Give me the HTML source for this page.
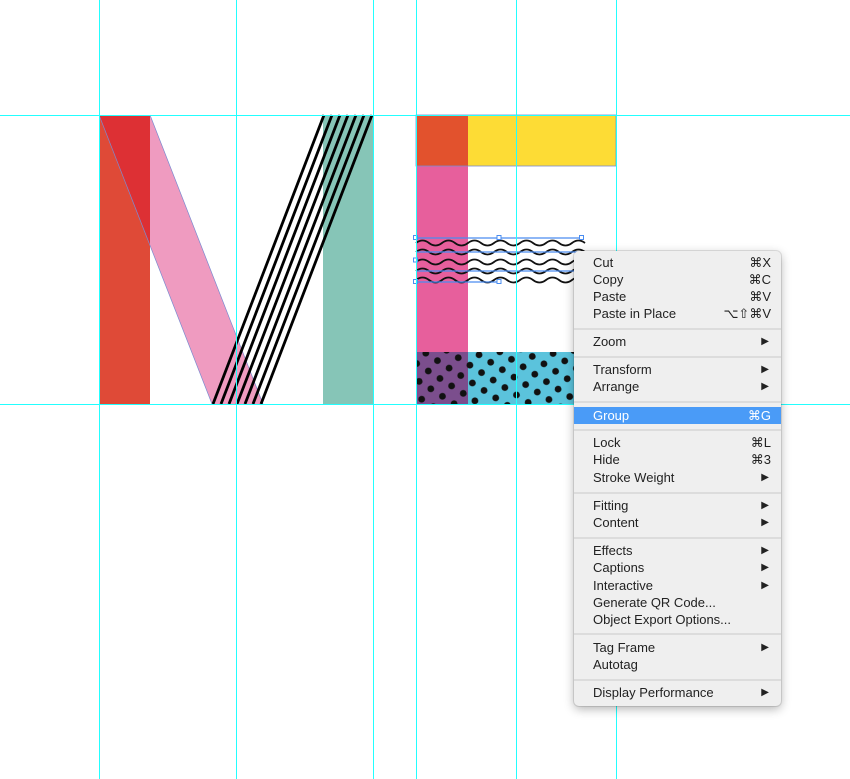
<!DOCTYPE html>
<html><head><meta charset="utf-8"><style>
body{margin:0;width:850px;height:779px;background:#fff;position:relative;overflow:hidden;font-family:"Liberation Sans",sans-serif}
.menu{position:absolute;left:574px;top:251px;width:207px;height:455px;background:#efefef;border-radius:5px;box-shadow:0 3px 10px rgba(0,0,0,.3),0 0 0 1px rgba(0,0,0,.1)}
.it{position:absolute;left:0;width:207px;height:17px;font-size:13px;color:#222;line-height:17px}
.it span.l{position:absolute;left:19px}
.it span.r{position:absolute;right:10px}
.it span.a{position:absolute;right:12px;font-size:10px}
.sep{position:absolute;left:0;width:207px;height:2px;background:#dcdcdc}
.hl{background:#4a9bf7;color:#fff}
.gv{position:absolute;top:0;width:1px;height:779px;background:#2ff}
.gh{position:absolute;left:0;height:1px;width:850px;background:#2ff}
</style></head><body>
<svg width="850" height="779" style="position:absolute;left:0;top:0">
<defs>
<pattern id="dots" width="21" height="18" patternUnits="userSpaceOnUse" patternTransform="rotate(-8)">
<circle cx="5" cy="4" r="3.4" fill="#111"/><circle cx="15.5" cy="13" r="3.4" fill="#111"/>
</pattern>
</defs>
<rect x="99" y="115" width="51" height="289" fill="#df4a37"/>
<polygon points="99,115 150,115 263,404 212,404" fill="#ef9bc0"/>
<polygon points="99,115 150,115 150,245" fill="#dd3034"/>
<rect x="323" y="115" width="50" height="289" fill="#86c5b7"/>
<line x1="99" y1="115" x2="212" y2="404" stroke="#7a8ad0" stroke-width=".7"/>
<line x1="150" y1="115" x2="263" y2="404" stroke="#7a8ad0" stroke-width=".7"/>
<g stroke="#000" stroke-width="2.8">
<line x1="324" y1="115" x2="213" y2="404"/><line x1="332" y1="115" x2="221" y2="404"/><line x1="340" y1="115" x2="229" y2="404"/><line x1="348" y1="115" x2="237" y2="404"/><line x1="356" y1="115" x2="245" y2="404"/><line x1="364" y1="115" x2="253" y2="404"/><line x1="372" y1="115" x2="261" y2="404"/>
</g>
<rect x="416" y="115" width="52" height="51" fill="#e2522d"/>
<rect x="468" y="115" width="148" height="51" fill="#fddc35"/>
<rect x="416" y="166" width="52" height="186" fill="#e75f9c"/>
<rect x="416" y="352" width="52" height="52" fill="#7b4e8d"/>
<rect x="468" y="352" width="110" height="52" fill="#5bc3dc"/>
<rect x="416" y="352" width="162" height="52" fill="url(#dots)"/>
<rect x="416" y="115" width="200" height="51" fill="none" stroke="#7a8ad0" stroke-width=".8"/>
<g fill="none" stroke="#111" stroke-width="1.8">
<path d="M416 243 q6.5 -5 13 0 t13 0 t13 0 t13 0 t13 0 t13 0 t13 0 t13 0 t13 0 t13 0 t13 0 t13 0 t13 0"/>
<path d="M416 252 q6.5 -5 13 0 t13 0 t13 0 t13 0 t13 0 t13 0 t13 0 t13 0 t13 0 t13 0 t13 0 t13 0 t13 0"/>
<path d="M416 262 q6.5 -5 13 0 t13 0 t13 0 t13 0 t13 0 t13 0 t13 0 t13 0 t13 0 t13 0 t13 0 t13 0 t13 0"/>
<path d="M416 271 q6.5 -5 13 0 t13 0 t13 0 t13 0 t13 0 t13 0 t13 0 t13 0 t13 0 t13 0 t13 0 t13 0 t13 0"/>
<path d="M416 280 q6.5 -5 13 0 t13 0 t13 0 t13 0 t13 0 t13 0 t13 0 t13 0 t13 0 t13 0 t13 0 t13 0 t13 0"/>
</g>
<g stroke="#4a8cf0" stroke-width="1.2"><line x1="416" y1="238" x2="582" y2="238"/><line x1="416" y1="282" x2="500" y2="282"/><line x1="416" y1="252" x2="582" y2="252"/><line x1="416" y1="271" x2="582" y2="271"/></g>
<g fill="#fff" stroke="#4a8cf0"><rect x="413.5" y="235.5" width="4" height="4"/><rect x="579.5" y="235.5" width="4" height="4"/><rect x="497" y="235.5" width="4" height="4"/><rect x="413.5" y="279.5" width="4" height="4"/><rect x="497" y="279.5" width="4" height="4"/><rect x="413.5" y="258" width="4" height="4"/></g>
</svg>
<div class="gv" style="left:99px"></div><div class="gv" style="left:236px"></div><div class="gv" style="left:373px"></div><div class="gv" style="left:416px"></div><div class="gv" style="left:516px"></div><div class="gv" style="left:616px"></div>
<div class="gh" style="top:115px"></div><div class="gh" style="top:404px"></div>
<div class="menu">
<div class="it" style="top:3px"><span class="l">Cut</span><span class="r">⌘X</span></div>
<div class="it" style="top:20px"><span class="l">Copy</span><span class="r">⌘C</span></div>
<div class="it" style="top:37px"><span class="l">Paste</span><span class="r">⌘V</span></div>
<div class="it" style="top:54px"><span class="l">Paste in Place</span><span class="r">⌥⇧⌘V</span></div>
<div class="sep" style="top:77px"></div>
<div class="it" style="top:82px"><span class="l">Zoom</span><span class="a">▶</span></div>
<div class="sep" style="top:105px"></div>
<div class="it" style="top:110px"><span class="l">Transform</span><span class="a">▶</span></div>
<div class="it" style="top:127px"><span class="l">Arrange</span><span class="a">▶</span></div>
<div class="sep" style="top:150px"></div>
<div class="it hl" style="top:156px"><span class="l">Group</span><span class="r">⌘G</span></div>
<div class="sep" style="top:178px"></div>
<div class="it" style="top:183px"><span class="l">Lock</span><span class="r">⌘L</span></div>
<div class="it" style="top:200px"><span class="l">Hide</span><span class="r">⌘3</span></div>
<div class="it" style="top:218px"><span class="l">Stroke Weight</span><span class="a">▶</span></div>
<div class="sep" style="top:241px"></div>
<div class="it" style="top:246px"><span class="l">Fitting</span><span class="a">▶</span></div>
<div class="it" style="top:263px"><span class="l">Content</span><span class="a">▶</span></div>
<div class="sep" style="top:286px"></div>
<div class="it" style="top:291px"><span class="l">Effects</span><span class="a">▶</span></div>
<div class="it" style="top:308px"><span class="l">Captions</span><span class="a">▶</span></div>
<div class="it" style="top:326px"><span class="l">Interactive</span><span class="a">▶</span></div>
<div class="it" style="top:343px"><span class="l">Generate QR Code...</span></div>
<div class="it" style="top:360px"><span class="l">Object Export Options...</span></div>
<div class="sep" style="top:382px"></div>
<div class="it" style="top:388px"><span class="l">Tag Frame</span><span class="a">▶</span></div>
<div class="it" style="top:405px"><span class="l">Autotag</span></div>
<div class="sep" style="top:428px"></div>
<div class="it" style="top:433px"><span class="l">Display Performance</span><span class="a">▶</span></div>
</div>
</body></html>
